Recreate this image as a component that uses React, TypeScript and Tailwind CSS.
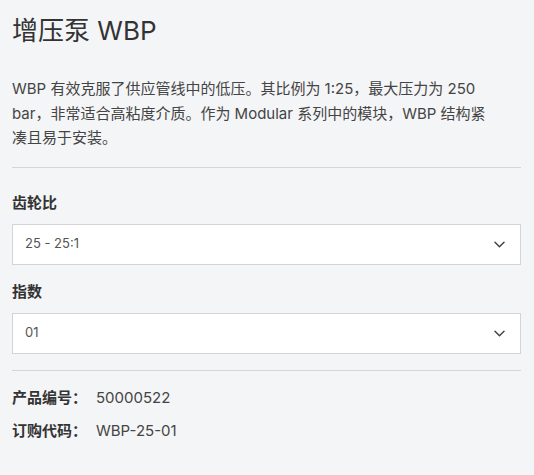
const font = {
  fontFamily: '"Inter", "Noto Sans CJK SC", sans-serif',
};

function Chevron() {
  return (
    <svg width="11" height="7" viewBox="0 0 11 7" fill="none" className="text-[#444]">
      <path d="M1 1.2l4.5 4.5 4.5-4.5" stroke="currentColor" strokeWidth="1.5" strokeLinecap="round" strokeLinejoin="round" />
    </svg>
  );
}

function Select({ value }: { value: string }) {
  return (
    <div className="flex h-[41px] items-center justify-between border border-[#d4d4d6] bg-white pl-[12px] pr-[15px] text-[13px] text-[#555]">
      <span>{value}</span>
      <Chevron />
    </div>
  );
}

export default function App() {
  return (
    <div className="min-h-[475px] w-full bg-[#f4f5f7] pl-[12px] pr-[13px] pt-[12px] text-[#333]" style={font}>
      <h1 className="text-[26px] leading-[38px] text-[#333]">增压泵 WBP</h1>
      <p className="mt-[27px] text-[15px] leading-[24.5px] text-[#444]">
        WBP 有效克服了供应管线中的低压。其比例为 1:25，最大压力为 250
        <br />
        bar，非常适合高粘度介质。作为 Modular 系列中的模块，WBP 结构紧
        <br />
        凑且易于安装。
      </p>
      <div className="mt-[16px] h-px bg-[#d6d6d8]" />
      <div className="mt-[24px] text-[15px] font-semibold leading-[22px]">齿轮比</div>
      <div className="mt-[10px]">
        <Select value="25 - 25:1" />
      </div>
      <div className="mt-[16px] text-[15px] font-semibold leading-[22px]">指数</div>
      <div className="mt-[10px]">
        <Select value="01" />
      </div>
      <div className="mt-[16px] h-px bg-[#d6d6d8]" />
      <div className="mt-[16px] flex flex-col gap-[11px] text-[15px] leading-[22px]">
        <div className="flex">
          <span className="w-[84px] font-semibold">产品编号：</span>
          <span className="text-[#444]">50000522</span>
        </div>
        <div className="flex">
          <span className="w-[84px] font-semibold">订购代码：</span>
          <span className="text-[#444]">WBP-25-01</span>
        </div>
      </div>
    </div>
  );
}
